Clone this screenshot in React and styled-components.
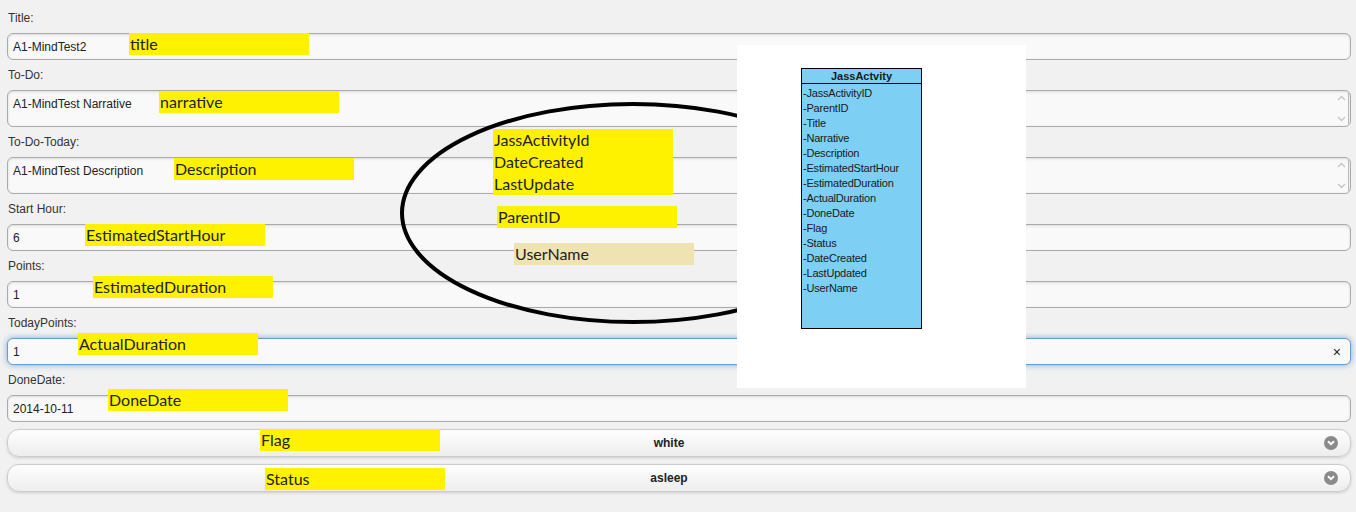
import React from "react";
import styled, { createGlobalStyle } from "styled-components";

const Global = createGlobalStyle`
  html, body { margin: 0; padding: 0; background: #f1f1f1; }
  body { font-family: "Liberation Sans", Arial, sans-serif; }
  * { box-sizing: border-box; }
`;

const Page = styled.div`
  position: relative;
  width: 1356px;
  height: 512px;
  overflow: hidden;
  padding: 10px 5px 0 7px;
  background: #f1f1f1;
`;

const Form = styled.form`
  display: flex;
  flex-direction: column;
  gap: 7px;
`;

const Field = styled.div`
  display: flex;
  flex-direction: column;
  gap: 7px;
`;

const Label = styled.label`
  font-size: 12px;
  line-height: 16px;
  color: #333;
  padding-left: 1px;
`;

const InputBox = styled.div`
  position: relative;
  display: flex;
  align-items: ${(p) => (p.$area ? "flex-start" : "center")};
  height: ${(p) => (p.$area ? "37px" : "27px")};
  padding: ${(p) => (p.$area ? "6px 5px 0 5px" : "0 5px")};
  background: #f9f9f9;
  border: 1px solid ${(p) => (p.$focus ? "#6a9ccc" : "#aaa")};
  border-radius: 6px;
  box-shadow: ${(p) =>
    p.$focus ? "0 0 6px #7fa9d6" : "inset 0 1px 3px rgba(0,0,0,0.12)"};
  font-size: 12px;
  color: #222;
`;

const Scroll = styled.div`
  position: absolute;
  right: 1px;
  top: 2px;
  bottom: 2px;
  width: 14px;
  border-right: 1px solid #bbb;
  display: flex;
  flex-direction: column;
  justify-content: space-between;
  align-items: center;
  padding: 2px 0;
`;

const Clear = styled.span`
  position: absolute;
  right: 9px;
  top: 50%;
  transform: translateY(-50%);
  font-size: 14px;
  color: #222;
`;

const SelectBtn = styled.div`
  position: relative;
  display: flex;
  align-items: center;
  justify-content: center;
  height: 28px;
  padding-right: 20px;
  background: linear-gradient(#fefefe, #ededed);
  border: 1px solid #ccc;
  border-radius: 12px;
  box-shadow: 0 1px 3px rgba(0, 0, 0, 0.15);
  font-size: 12px;
  font-weight: bold;
  color: #222;
`;

const SelIcon = styled.span`
  position: absolute;
  right: 12px;
  top: 50%;
  transform: translateY(-50%);
  width: 14px;
  height: 14px;
  border-radius: 50%;
  background: #8a8a8a;
  display: flex;
  align-items: center;
  justify-content: center;
`;

const Note = styled.div`
  position: absolute;
  left: ${(p) => p.$x}px;
  top: ${(p) => p.$y}px;
  width: 180px;
  padding-left: 1px;
  background: ${(p) => (p.$beige ? "#efe3b1" : "#fff200")};
  font-family: Lato, "Open Sans", sans-serif;
  font-size: 16px;
  line-height: 22px;
  color: #222;
`;

const Ellipse = styled.svg`
  position: absolute;
  left: 0;
  top: 0;
  pointer-events: none;
`;

const Panel = styled.div`
  position: absolute;
  left: 737px;
  top: 45px;
  width: 289px;
  height: 343px;
  background: #fff;
  padding: 23px 0 0 64px;
`;

const ClassBox = styled.div`
  width: 121px;
  height: 261px;
  background: #7dcff4;
  border: 1px solid #000;
  font-family: "Liberation Sans", Arial, sans-serif;
  color: #1a1a1a;
`;

const ClassHead = styled.div`
  height: 15px;
  border-bottom: 1px solid #000;
  text-align: center;
  font-weight: bold;
  font-size: 11px;
  line-height: 14px;
`;

const ClassItems = styled.div`
  padding: 2px 0 0 1px;
  font-size: 11px;
  line-height: 15px;
  letter-spacing: -0.2px;
`;

const Chev = ({ up }) => (
  <svg width="9" height="6" viewBox="0 0 9 6">
    <path
      d={up ? "M1 5 L4.5 1.5 L8 5" : "M1 1 L4.5 4.5 L8 1"}
      fill="none"
      stroke="#c4c4c4"
      strokeWidth="1.3"
    />
  </svg>
);

const DownIcon = () => (
  <SelIcon>
    <svg width="8" height="6" viewBox="0 0 8 6">
      <path d="M1 1.2 L4 4.2 L7 1.2" fill="none" stroke="#fff" strokeWidth="2" />
    </svg>
  </SelIcon>
);

const fields = [
  { label: "Title:", value: "A1-MindTest2" },
  { label: "To-Do:", value: "A1-MindTest Narrative", area: true },
  { label: "To-Do-Today:", value: "A1-MindTest Description", area: true },
  { label: "Start Hour:", value: "6" },
  { label: "Points:", value: "1" },
  { label: "TodayPoints:", value: "1", focus: true },
  { label: "DoneDate:", value: "2014-10-11" },
];

const notes = [
  { x: 129, y: 33, t: "title" },
  { x: 159, y: 91, t: "narrative" },
  { x: 174, y: 158, t: "Description" },
  { x: 85, y: 224, t: "EstimatedStartHour" },
  { x: 93, y: 276, t: "EstimatedDuration" },
  { x: 78, y: 333, t: "ActualDuration" },
  { x: 108, y: 389, t: "DoneDate" },
  { x: 260, y: 429, t: "Flag" },
  { x: 265, y: 468, t: "Status" },
  { x: 493, y: 129, t: ["JassActivityId", "DateCreated", "LastUpdate"] },
  { x: 497, y: 206, t: "ParentID" },
  { x: 514, y: 243, t: "UserName", beige: true },
];

const attrs = [
  "-JassActivityID",
  "-ParentID",
  "-Title",
  "-Narrative",
  "-Description",
  "-EstimatedStartHour",
  "-EstimatedDuration",
  "-ActualDuration",
  "-DoneDate",
  "-Flag",
  "-Status",
  "-DateCreated",
  "-LastUpdated",
  "-UserName",
];

export default function App() {
  return (
    <>
      <Global />
      <Page>
        <Form>
          {fields.map((f) => (
            <Field key={f.label}>
              <Label>{f.label}</Label>
              <InputBox $area={f.area} $focus={f.focus}>
                {f.value}
                {f.area && (
                  <Scroll>
                    <Chev up />
                    <Chev />
                  </Scroll>
                )}
                {f.focus && <Clear>×</Clear>}
              </InputBox>
            </Field>
          ))}
          <SelectBtn>
            white
            <DownIcon />
          </SelectBtn>
          <SelectBtn>
            asleep
            <DownIcon />
          </SelectBtn>
        </Form>

        {notes.map((n, i) => (
          <Note key={i} $x={n.x} $y={n.y} $beige={n.beige}>
            {Array.isArray(n.t) ? n.t.map((l) => <div key={l}>{l}</div>) : n.t}
          </Note>
        ))}

        <Ellipse width="1356" height="512">
          <ellipse cx="633" cy="213" rx="231" ry="109" fill="none" stroke="#000" strokeWidth="4" />
        </Ellipse>

        <Panel>
          <ClassBox>
            <ClassHead>JassActvity</ClassHead>
            <ClassItems>
              {attrs.map((a) => (
                <div key={a}>{a}</div>
              ))}
            </ClassItems>
          </ClassBox>
        </Panel>
      </Page>
    </>
  );
}
